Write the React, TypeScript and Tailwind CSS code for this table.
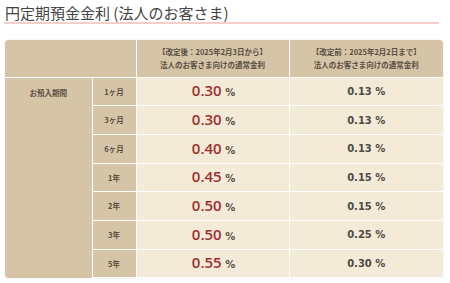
const ROWS = [
  { term: "1ヶ月", now: "0.30", before: "0.13" },
  { term: "3ヶ月", now: "0.30", before: "0.13" },
  { term: "6ヶ月", now: "0.40", before: "0.13" },
  { term: "1年", now: "0.45", before: "0.15" },
  { term: "2年", now: "0.50", before: "0.15" },
  { term: "3年", now: "0.50", before: "0.25" },
  { term: "5年", now: "0.55", before: "0.30" },
];

const font = "font-['DejaVu_Sans','Noto_Sans_CJK_JP',sans-serif]";

export default function App() {
  return (
    <div className={`w-[450px] h-[283px] bg-white px-[4px] pt-[4px] ${font}`}>
      <h2 className="font-['Noto_Sans_CJK_JP',sans-serif] text-[15px] leading-[17px] text-[#444] border-b-2 border-[#f6cdc8] pb-[1px] pl-[1px] mr-[7px]">
        円定期預金金利 (法人のお客さま)
      </h2>

      <div className="mt-[16px] ml-[1px] w-[438px] rounded-[4px] overflow-hidden shadow-[0_0_2px_rgba(0,0,0,0.12)]">
        <table className="w-full border-collapse table-fixed text-[#5a4f44]">
          <colgroup>
            <col className="w-[87px]" />
            <col className="w-[44px]" />
            <col className="w-[153px]" />
            <col className="w-[154px]" />
          </colgroup>
          <thead>
            <tr className="h-[37px] bg-[#d5c4a6]">
              <th colSpan={2} className="border-r border-b border-white" />
              <th className="border-r border-b border-white text-[7.5px] leading-[13px] font-bold font-['Noto_Sans_CJK_JP',sans-serif]">
                【改定後：2025年2月3日から】
                <br />
                法人のお客さま向けの通常金利
              </th>
              <th className="border-b border-white text-[7.5px] leading-[13px] font-bold font-['Noto_Sans_CJK_JP',sans-serif]">
                【改定前：2025年2月2日まで】
                <br />
                法人のお客さま向けの通常金利
              </th>
            </tr>
          </thead>
          <tbody>
            {ROWS.map((row, i) => (
              <tr key={row.term} className="h-[28.7px]">
                {i === 0 && (
                  <th
                    rowSpan={ROWS.length}
                    className="bg-[#d5c4a6] border-r border-white align-top pt-[9px] text-[7.5px] font-bold font-['Noto_Sans_CJK_JP',sans-serif]"
                  >
                    お預入期間
                  </th>
                )}
                <th className="bg-[#d5c4a6] border-r border-b border-white text-[7.5px] font-bold font-['Noto_Sans_CJK_JP',sans-serif]">
                  {row.term}
                </th>
                <td className="bg-[#f3ead7] border-r border-b border-white text-center pl-[2px]">
                  <span className="font-['Open_Sans',sans-serif] text-[15px] font-semibold text-[#9e2f2f]">{row.now}</span>
                  <span className="text-[10px] font-bold text-[#5a4f44]"> %</span>
                </td>
                <td className="bg-[#f3ead7] border-b border-white text-center text-[10px] font-bold text-[#4f4a44]">
                  {row.before} %
                </td>
              </tr>
            ))}
          </tbody>
        </table>
      </div>
    </div>
  );
}
